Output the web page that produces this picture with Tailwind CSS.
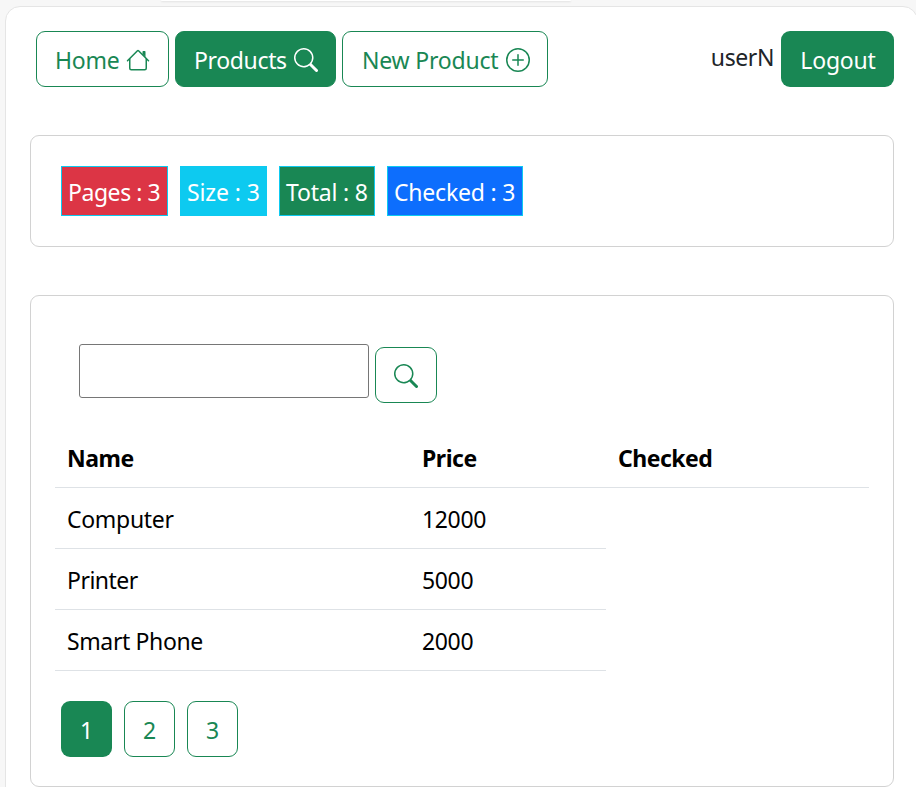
<!DOCTYPE html>
<html lang="en">
<head>
<meta charset="utf-8">
<title>Products</title>
<script src="https://cdn.jsdelivr.net/npm/@tailwindcss/browser@4"></script>
</head>
<body class="h-[787px] w-[916px] overflow-hidden bg-[#f7f7f7] font-['Noto_Sans',sans-serif] text-[23px] leading-[36px] text-[#212529]">
<svg class="hidden">
  <symbol id="search" viewBox="0 0 16 16"><path d="M11.742 10.344a6.5 6.5 0 1 0-1.397 1.398h-.001q.044.06.098.115l3.85 3.85a1 1 0 0 0 1.415-1.414l-3.85-3.85a1 1 0 0 0-.115-.1zM12 6.5a5.500 5.500 0 1 1-11 0 5.500 5.500 0 0 1 11 0"/></symbol>
  <symbol id="house" viewBox="0 0 16 16"><path fill-rule="evenodd" d="M2 13.5V7h1v6.500a.5.5 0 0 0 .5.5h9a.5.5 0 0 0 .5-.5V7h1v6.500a1.500 1.500 0 0 1-1.500 1.500h-9A1.500 1.500 0 0 1 2 13.500m11-11V6l-2-2V2.500a.5.5 0 0 1 .5-.5h1a.5.5 0 0 1 .5.5"/><path fill-rule="evenodd" d="M7.293 1.500a1 1 0 0 1 1.414 0l6.647 6.646a.5.5 0 0 1-.708.708L8 2.207 1.354 8.854a.5.5 0 1 1-.708-.708z"/></symbol>
  <symbol id="plus" viewBox="0 0 16 16"><path d="M8 15A7 7 0 1 1 8 1a7 7 0 0 1 0 14m0 1A8 8 0 1 0 8 0a8 8 0 0 0 0 16"/><path d="M8 4a.5.5 0 0 1 .5.5v3h3a.5.5 0 0 1 0 1h-3v3a.5.5 0 0 1-1 0v-3h-3a.5.5 0 0 1 0-1h3v-3A.5.5 0 0 1 8 4"/></symbol>
</svg>
<div class="mx-auto h-[1px] w-[410px] -translate-x-[92px] rounded-b-xl bg-white shadow-[0_1px_2px_rgba(0,0,0,0.12)]"></div>
<main class="mt-[5px] ml-[5px] h-[800px] w-[913px] rounded-[15px] border border-[#e5e5e5] bg-white pt-6 pr-[23px] pl-6">
  <nav class="flex h-14 justify-between pl-1.5 whitespace-nowrap">
    <div class="flex gap-1.5">
      <a class="flex h-14 w-[133px] items-center justify-between rounded-[9px] border border-[#198754] pt-0.5 pr-[18px] pl-[18px] text-[#198754]"><span class="tracking-[-0.2px]">Home</span><svg class="mb-px size-6 fill-current"><use href="#house"/></svg></a>
      <a class="flex h-14 w-[161px] items-center justify-between rounded-[9px] border border-[#198754] bg-[#198754] pt-0.5 pr-[17px] pl-[18px] text-white"><span class="tracking-[-0.35px]">Products</span><svg class="size-6 fill-current"><use href="#search"/></svg></a>
      <a class="flex h-14 w-[206px] items-center justify-between rounded-[9px] border border-[#198754] pt-0.5 pr-[17px] pl-[19px] text-[#198754]"><span class="tracking-[-0.2px]">New Product</span><svg class="size-6 fill-current"><use href="#plus"/></svg></a>
    </div>
    <div class="flex gap-[7px]">
      <span class="pt-[8px] tracking-[-0.4px]">userN</span>
      <a class="flex h-14 w-[113px] items-center justify-center rounded-[9px] bg-[#198754] pt-0.5 pl-px tracking-[-0.2px] text-white">Logout</a>
    </div>
  </nav>
  <section class="mt-12 flex h-28 w-[864px] gap-3 rounded-[9px] border border-[#d2d2d2] px-[30px] pt-[30px] whitespace-nowrap text-white">
    <span class="h-[50px] w-[107px] border border-[#0dcaf0] bg-[#dc3545] pt-[7px] pl-1.5 tracking-[-0.45px]">Pages : 3</span>
    <span class="h-[50px] w-[87px] border border-[#0dcaf0] bg-[#0dcaf0] pt-[7px] pl-1.5 tracking-[-0.1px]">Size : 3</span>
    <span class="h-[50px] w-24 border border-[#0dcaf0] bg-[#198754] pt-[7px] pl-1.5 tracking-[-0.2px]">Total : 8</span>
    <span class="h-[50px] w-[136px] border border-[#0dcaf0] bg-[#0d6efd] pt-[7px] pl-1.5 tracking-[-0.2px]">Checked : 3</span>
  </section>
  <section class="mt-12 h-[492px] w-[864px] rounded-[9px] border border-[#d2d2d2] px-6 pt-12">
    <form class="flex gap-1.5 pl-6">
      <input type="text" aria-label="Keyword" class="h-[54px] w-[290px] rounded-[3px] border border-[#767676] bg-white">
      <button type="button" aria-label="Search" class="mt-[3px] flex h-14 w-[62px] items-center justify-center rounded-[9px] border border-[#198754] text-[#198754]"><svg class="mt-0.5 size-6 fill-current"><use href="#search"/></svg></button>
    </form>
    <table class="mt-6 w-[814px] table-fixed border-separate border-spacing-0 text-left whitespace-nowrap text-black">
      <colgroup><col class="w-[355px]"><col class="w-[196px]"><col class="w-[263px]"></colgroup>
      <thead>
        <tr class="h-[61px] font-bold"><th class="border-b border-[#dee2e6] p-0 pt-0.5 pl-3 tracking-[-0.45px]">Name</th><th class="border-b border-[#dee2e6] p-0 pt-0.5 pl-3 tracking-[-0.45px]">Price</th><th class="border-b border-[#dee2e6] p-0 pt-0.5 pl-3 tracking-[-0.5px]">Checked</th></tr>
      </thead>
      <tbody>
        <tr class="h-[61px]"><td class="border-b border-[#dee2e6] p-0 pt-0.5 pl-3 tracking-[-0.3px]">Computer</td><td class="border-b border-[#dee2e6] p-0 pt-0.5 pl-3 tracking-[-0.35px]">12000</td></tr>
        <tr class="h-[61px]"><td class="border-b border-[#dee2e6] p-0 pt-0.5 pl-3 tracking-[-0.5px]">Printer</td><td class="border-b border-[#dee2e6] p-0 pt-0.5 pl-3 tracking-[-0.35px]">5000</td></tr>
        <tr class="h-[61px]"><td class="border-b border-[#dee2e6] p-0 pt-0.5 pl-3 tracking-[-0.38px]">Smart Phone</td><td class="border-b border-[#dee2e6] p-0 pt-0.5 pl-3 tracking-[-0.35px]">2000</td></tr>
      </tbody>
    </table>
    <div class="mt-[30px] flex gap-3 pl-1.5 text-[#198754]">
      <a class="flex h-14 w-[51px] items-center justify-center rounded-[9px] bg-[#198754] pt-0.5 text-white">1</a>
      <a class="flex h-14 w-[51px] items-center justify-center rounded-[9px] border border-[#198754] pt-0.5">2</a>
      <a class="flex h-14 w-[51px] items-center justify-center rounded-[9px] border border-[#198754] pt-0.5">3</a>
    </div>
  </section>
</main>
</body>
</html>
